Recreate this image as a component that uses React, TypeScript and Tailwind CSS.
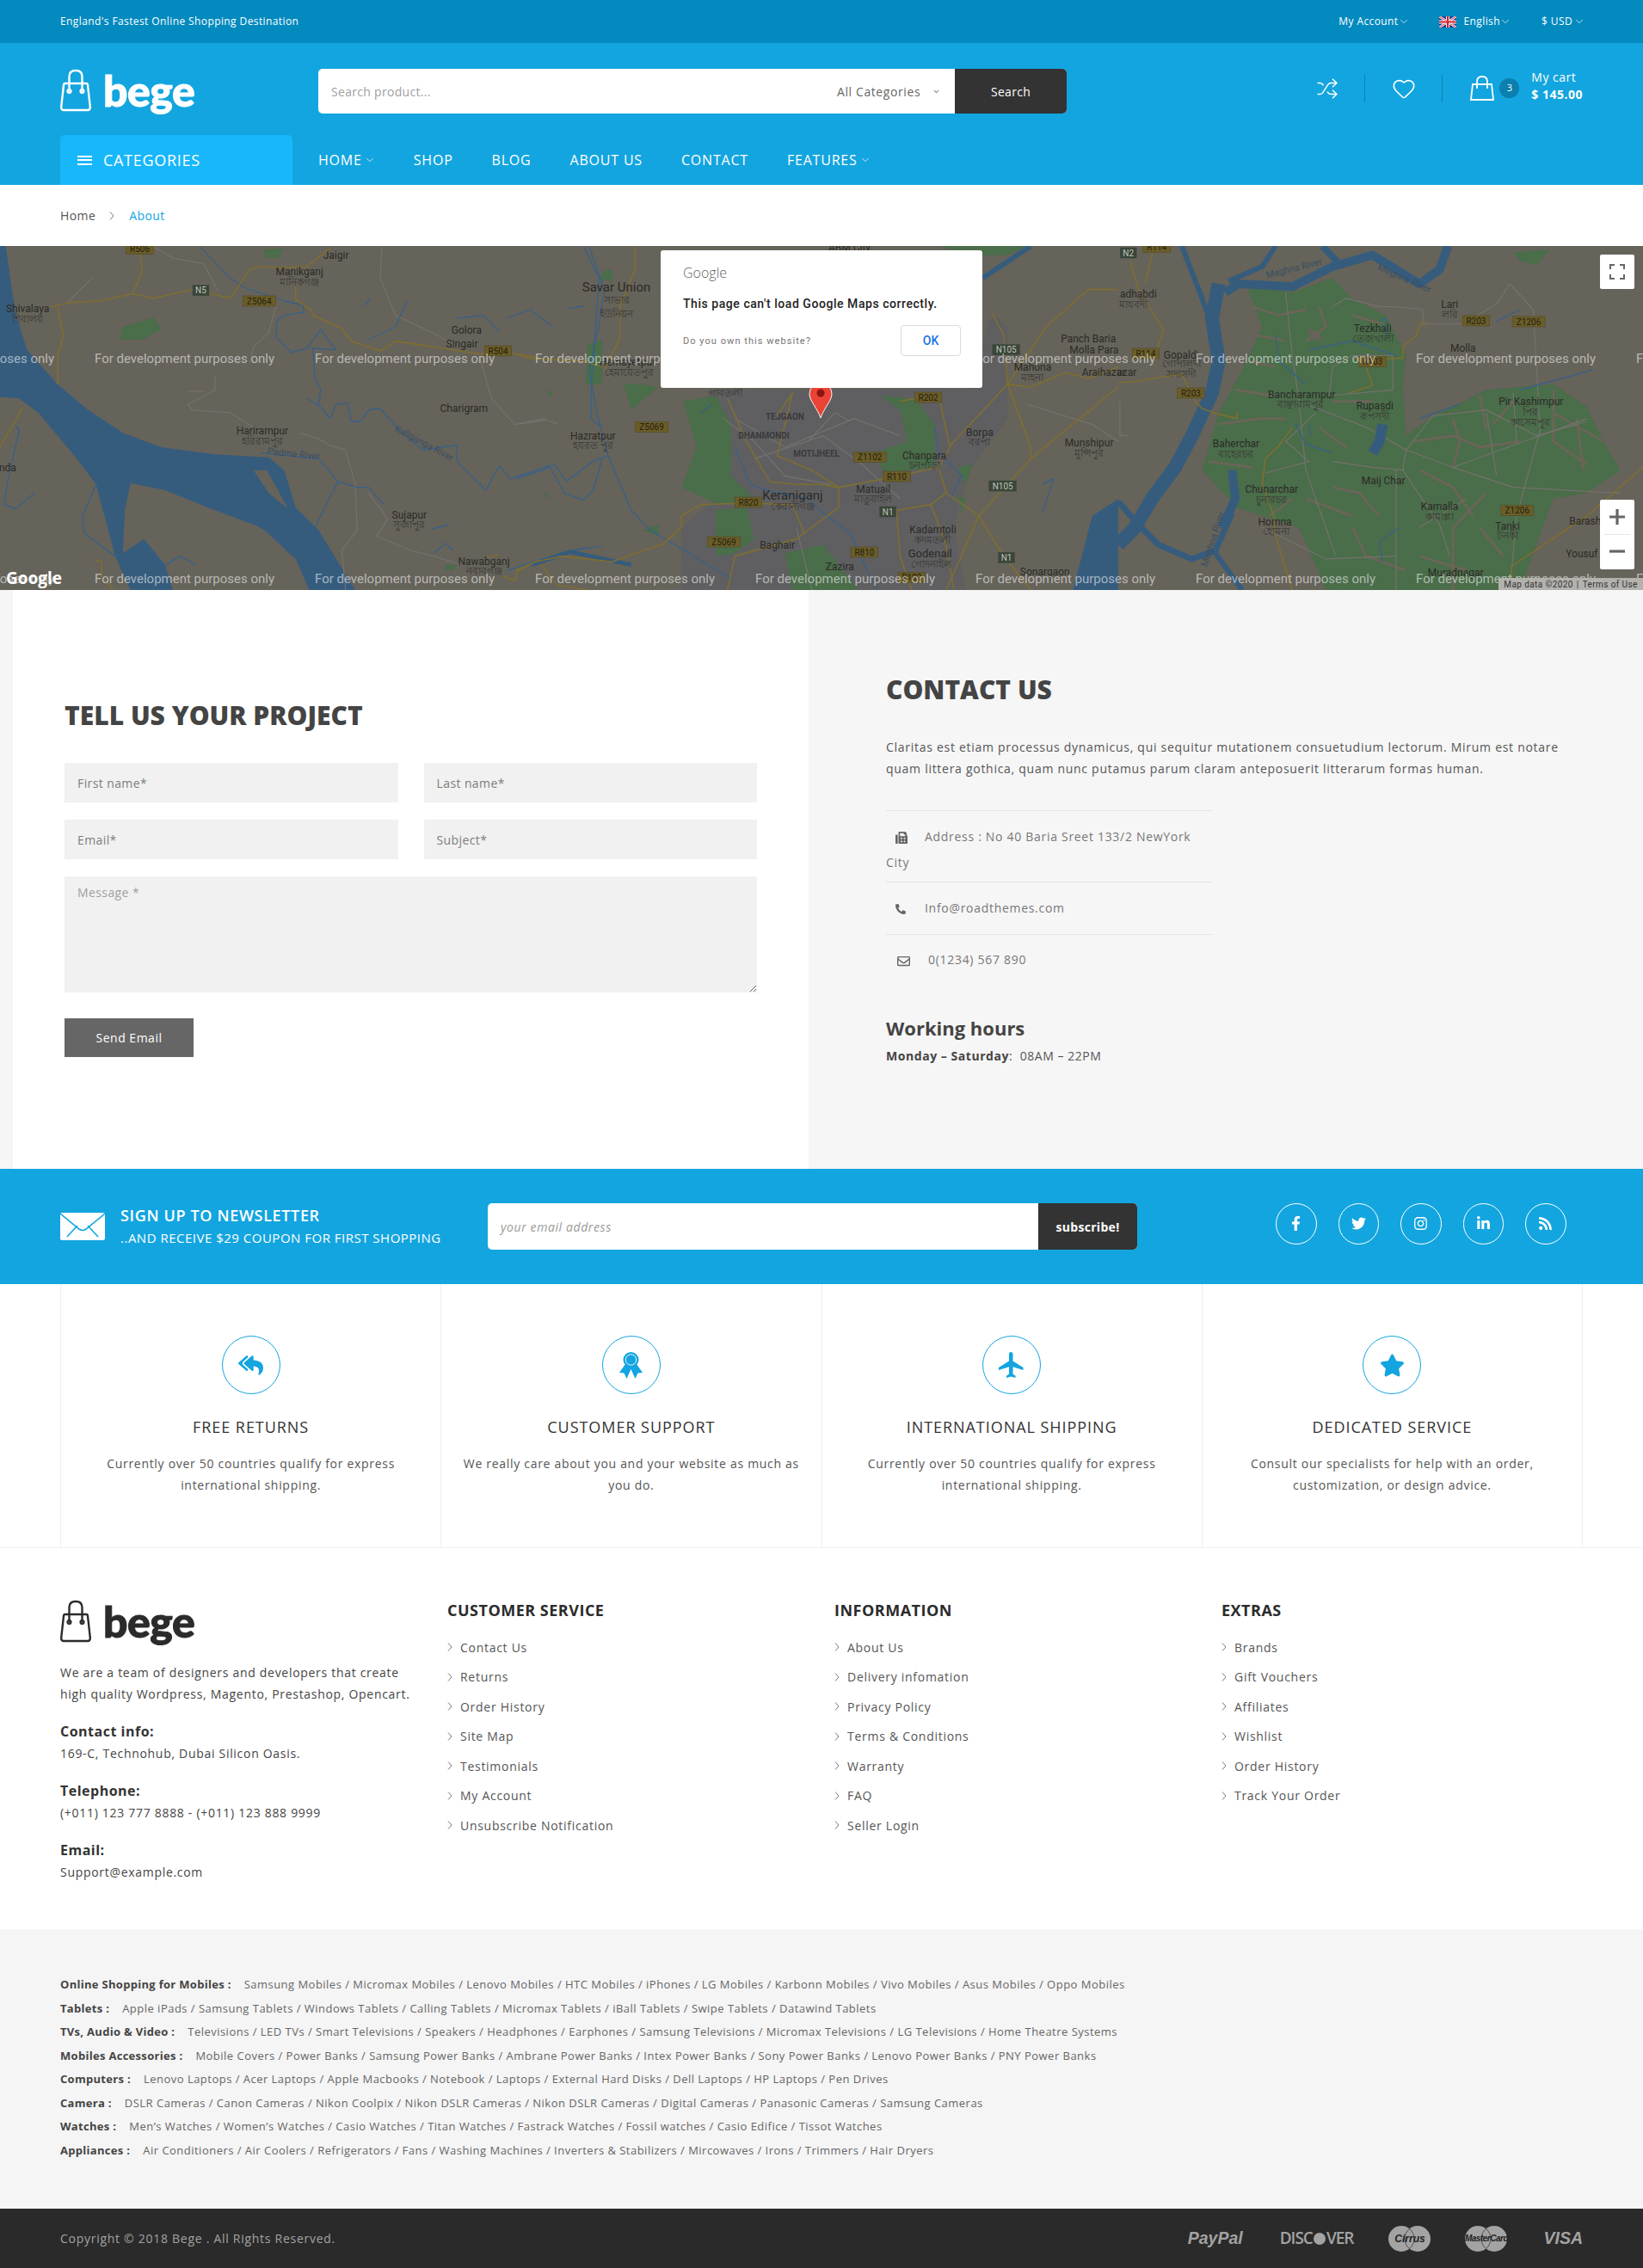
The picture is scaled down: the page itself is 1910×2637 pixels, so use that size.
import { ChevronDown, Heart, Shuffle } from "lucide-react";
import {
  FaFacebookF,
  FaFax,
  FaInstagram,
  FaLinkedinIn,
  FaPhone,
  FaRegEnvelope,
  FaReplyAll,
  FaRss,
  FaStar,
  FaTwitter,
} from "react-icons/fa";
import { MdFlight } from "react-icons/md";

type Pts = string[];
type Label = [number, number, string, number?, number?];
type Shield = [number, number, string, number?];

interface Zone {
  ox: number;
  sx: number;
  water?: Pts;
  land?: Pts;
  city?: Pts;
  green?: Pts;
  fields?: Pts;
  river?: Pts;
  wide?: [string, number][];
  gray?: Pts;
  road?: Pts;
  labels: Label[];
  bn: Label[];
  shields: Shield[];
}

// map traced in three chunks, coords are as measured on the crops
const ZONES: Zone[] = [
  {
    ox: 0,
    sx: 1 / 2.24,
    water: [
      "0,18 15,18 30,160 40,250 70,380 150,500 230,590 320,670 420,720 560,745 700,755 740,800 770,930 830,1010 925,1218 805,1218 770,1110 660,990 540,930 430,870 340,845 325,940 320,1090 375,1040 430,1130 450,1218 340,1218 300,1100 250,850 200,760 100,600 50,550 0,545",
    ],
    land: ["660,800 695,800 750,935 700,880", "655,985 690,1010 765,1105 680,1020"],
    green: ["320,300 370,280 400,268 420,310 370,345 310,345", "685,30 740,28 725,60 695,60", "1420,520 1440,530 1435,550", "1530,360 1568,345 1568,500 1525,500", "1160,1130 1190,1130 1180,1148 1158,1148", "1415,880 1430,885 1425,900"],
    river: [
      "520,20 600,130 640,165 740,210 790,225 790,250 740,260 720,280 720,340 760,390 800,375 835,310 875,380 815,375 820,480 835,520 830,575",
      "800,550 835,580 860,620 875,570 905,565 915,630 940,630 960,590 990,585 1040,660 1100,730 1190,712 1190,770 1265,870 1300,785 1330,830 1430,785 1470,880 1520,905 1545,870 1568,760",
      "250,850 215,960 220,1020 300,1100 310,1100",
      "880,840 820,1000",
      "680,740 830,760 880,840 930,860 960,860 1000,920",
      "40,645 50,660 20,840 10,920 40,935 90,880",
      "1520,20 1560,130 1540,500 1540,620 1568,650",
      "1130,1090 1160,1055 1180,1080",
      "1320,1150 1400,1115 1490,1080 1568,1065",
      "1125,1005 1170,990",
      "950,225 965,205",
      "960,345 1030,300 1060,210",
      "1190,270 1260,260 1300,320",
      "1320,270 1380,240 1440,300",
      "1480,235 1520,228",
      "430,1130 470,1100 510,1130",
    ],
    gray: [
      "240,130 180,210 180,220",
      "400,20 450,60 530,80 570,180",
      "720,220 700,320 660,370 650,430",
      "560,470 560,520 490,570 500,590 600,600 660,650",
      "490,525 530,525",
      "780,670 830,690 860,715 900,730 925,850 930,1010 890,1080 900,1218",
      "960,880 1010,970 980,1030 1070,1080 1130,1100 1200,1130",
      "995,20 990,130 1030,260 1140,330 1190,370",
      "1250,410 1280,550 1340,640 1420,620",
    ],
    road: [
      "365,30 370,110 345,185 255,210 180,215 130,232",
      "345,185 400,200 500,170 600,200 650,100 680,88 720,95 800,90 860,25",
      "770,160 770,205 810,240 815,260 890,305 915,350 990,385 1030,350 1250,395 1330,390 1380,410 1520,420 1568,440",
      "150,232 165,330 150,400 150,500",
      "60,580 0,720",
      "245,1112 265,1120 265,1170 295,1218",
      "1310,1170 1340,1185 1350,1150 1400,1115 1450,1200 1530,1218",
      "1270,1105 1300,1095",
    ],
    labels: [
      [875, 50, "Jaigir"],
      [780, 108, "Manikganj"],
      [72, 237, "Shivalaya"],
      [1215, 312, "Golora"],
      [1203, 360, "Singair"],
      [1208, 583, "Charigram"],
      [683, 663, "Harirampur"],
      [1066, 955, "Sujapur"],
      [1260, 1117, "Nawabganj"],
      [20, 790, "nda"],
      [765, 742, "Padma River", 11, 6],
      [1105, 705, "Kaliganga River", 11, 28],
    ],
    bn: [
      [780, 145, "মানিকগঞ্জ"],
      [72, 272, "শিবালয়"],
      [683, 698, "হরিরামপুর"],
      [1066, 990, "সুজাপুর"],
      [1260, 1152, "নবাবগঞ্জ"],
    ],
    shields: [
      [364, 28, "R506"],
      [523, 173, "N5", 1],
      [675, 210, "Z5064"],
      [1297, 384, "R504"],
    ],
  },
  {
    ox: 600,
    sx: 1 / 2.24,
    city: ["500,520 1170,515 1240,255 1280,300 1280,620 1180,800 1140,1000 1170,1218 430,1218 430,1000 520,900 500,700"],
    water: ["1568,900 1500,960 1450,1218 1568,1218"],
    green: [
      "435,560 520,540 560,640 560,820 620,900 530,920 430,860 470,720",
      "280,500 330,500 370,510 300,590",
      "520,940 600,930 620,1040 570,1090 520,1100",
      "950,540 1040,550 1090,640 1090,790 960,810 930,740 1020,700 1000,590",
      "700,1090 800,1060 890,1218 720,1218",
      "330,1010 370,990 370,1030",
      "1150,790 1190,780 1170,850",
      "1150,880 1170,900 1160,950",
      "230,105 250,100 250,140 215,135",
      "1100,18 1330,18 1280,50 1190,50",
    ],
    river: [
      "190,20 230,170 215,300 190,450 210,600 240,750 300,940 350,1010 450,1090 560,1180",
      "0,830 70,800 100,780 130,840 200,770 240,750",
      "570,720 610,850 650,870 760,900 800,950 870,1020 900,1110 940,1218",
      "1090,650 1100,740 1160,820 1130,900",
      "480,600 510,570",
      "130,1090 180,1070",
      "1370,850 1400,830 1370,950",
    ],
    wide: [["1340,18 1260,90 1215,130", 3], ["300,1130 140,1085 40,1130", 2.5]],
    gray: [
      "570,620 700,720 880,620 1000,680",
      "620,760 800,680 900,780 1000,900",
      "540,620 620,700 700,820 820,850",
      "0,640 80,625 110,640",
      "760,700 830,600 870,630",
      "730,1000 770,1218",
      "1330,570 1500,640 1568,700",
    ],
    road: [
      "0,395 50,405",
      "1240,255 1270,330 1280,500 1340,720 1340,760 1205,960 1120,1218",
      "1280,500 1340,510 1430,460 1490,480 1568,440",
      "1280,500 1380,300 1490,170 1568,170",
      "1568,510 1340,760",
      "840,860 960,830 1100,790 1120,880 1205,960 1260,1080 1340,1218",
      "1120,880 1080,920 990,940 1000,1100 1030,1218",
      "1080,920 1120,1060 1140,1218",
      "840,860 840,930 730,1040 570,1100 550,1218",
      "430,960 430,1000 380,1060 330,1080 250,1120 120,1100 50,1120 0,1150",
      "430,960 480,920 600,915 720,920 750,1020",
      "550,550 600,700 660,840 730,850 790,850 840,860",
      "680,610 720,530 680,750 770,800 840,860",
      "310,20 310,100 270,230 270,340 230,450",
      "1100,790 1130,720 1100,540 1040,550 1000,560",
      "1130,715 1280,500",
    ],
    labels: [
      [868, 22, "ABM City"],
      [261, 160, "Savar Union", 15],
      [200, 679, "Hazratpur"],
      [290, 423, "Hemayetpur"],
      [700, 612, "TEJGAON", 10],
      [645, 678, "DHANMONDI", 10],
      [782, 741, "MOTIJHEEL", 10],
      [720, 887, "Keraniganj", 15],
      [680, 1060, "Baghair"],
      [930, 865, "Matuail"],
      [1063, 748, "Chanpara"],
      [1207, 667, "Borpa"],
      [1085, 1008, "Kadamtoli"],
      [1078, 1090, "Godenail", 13],
      [843, 1135, "Zazira"],
      [1345, 441, "Mahona"],
      [1490, 340, "Panch Baria"],
      [1505, 381, "Molla Para"],
      [1530, 457, "Araihazar"],
      [1492, 703, "Munshipur"],
      [1377, 1153, "Sonargaon"],
    ],
    bn: [
      [261, 207, "সাভার"],
      [261, 255, "ইউনিয়ন"],
      [200, 715, "হযরত পুর"],
      [295, 460, "হেমায়েতপুর"],
      [545, 530, "গাবতলী"],
      [720, 928, "কেরানীগঞ্জ"],
      [930, 900, "মাতুয়াইল"],
      [1063, 783, "চনপাড়া"],
      [1207, 703, "বরপা"],
      [1085, 1045, "কদমতলী"],
      [1080, 1128, "গোদনাইল"],
      [1345, 478, "মাহনা"],
      [1492, 740, "মুন্সিপুর"],
    ],
    shields: [
      [1276, 380, "N105", 1],
      [353, 650, "Z5069"],
      [1073, 546, "R202"],
      [921, 755, "Z1102"],
      [991, 822, "R110"],
      [1267, 855, "N105", 1],
      [605, 912, "R820"],
      [968, 945, "N1", 1],
      [541, 1050, "Z5069"],
      [907, 1086, "R810"],
      [1277, 1105, "N1", 1],
      [1030, 1175, "R102"],
    ],
  },
  {
    ox: 1300,
    sx: 1 / 2.57,
    green: [
      "380,150 520,180 640,130 700,200 800,260 860,400 850,500 860,680 940,610 1000,580 1100,520 1300,500 1400,580 1450,700 1500,800 1400,880 1300,900 1200,1218 620,1218 540,1000 350,930 330,900 250,800 300,600 370,450 430,300",
      "1180,40 1290,30 1250,85 1200,70",
    ],
    land: ["565,305 600,320 610,345 575,345"],
    fields: [
      "400,230 480,260 560,240",
      "420,330 500,350",
      "390,420 470,440",
      "350,520 460,540",
      "300,640 420,620 500,620",
      "270,770 400,790",
      "600,230 620,300 560,350",
      "700,260 790,290",
      "640,560 760,560",
      "880,700 1000,680 1080,720 1200,700",
      "1000,620 1020,700 1000,790",
      "1080,540 1100,660",
      "1300,520 1300,700 1400,780",
      "1180,560 1120,640",
      "900,800 1000,860 1060,960",
      "1100,880 1000,1000 1000,1218",
      "640,860 720,880 780,960",
      "560,900 700,960",
      "700,1000 740,1100 860,1150",
      "900,1100 1040,1150",
      "1080,1000 1150,1100",
      "1300,600 1450,700",
      "1370,620 1390,800",
      "450,960 520,900",
      "600,650 680,720",
    ],
    wide: [
      ["320,180 360,150 520,160 640,90 760,50 900,150 960,100 985,18", 5],
      ["300,150 280,270 300,420 280,530 220,680 170,790 100,900 50,1000 0,1060", 8],
      ["190,18 250,200 290,330", 3],
      ["470,18 430,90 330,140", 3],
      ["610,18 660,80", 4],
      ["0,910 60,990 120,1060 220,1110 290,1080 340,950", 3.5],
      ["290,1090 370,1218", 3],
      ["340,800 350,900 310,1000", 5],
      ["790,640 780,700 760,740", 6],
    ],
    river: [
      "470,330 480,420 560,500",
      "570,380 700,350 830,400",
      "530,640 560,710 640,740",
      "900,620 1020,570",
      "1200,520 1420,450",
      "570,640 575,680",
      "780,280 800,270 800,340",
      "1130,280 1200,240",
      "840,1000 780,1050 790,1120",
    ],
    gray: [
      "500,180 520,400 540,560 560,800 620,1000 650,1100",
      "640,230 680,200 780,230 830,230 910,240 910,290 1030,290",
      "1030,290 1130,220 1170,150 1240,240 1260,660 1190,960 1170,1218",
      "560,570 740,650 860,730 1000,790 1180,860",
      "640,770 760,790 850,800 860,730 940,610 1100,590 1250,680 1400,630",
      "590,600 500,700 570,770 440,810",
      "700,400 640,440 630,540 820,520 820,400 700,400",
      "850,800 960,990 990,1100",
      "830,800 830,1218",
      "1000,790 1400,620",
      "1180,860 1500,880",
      "430,1000 620,1110 830,1100",
      "5,560 5,680 30,680",
      "1190,700 1180,530",
      "1100,600 1130,820",
      "900,1000 1040,900",
    ],
    road: [
      "35,70 60,170 135,310 110,400",
      "105,30 80,150",
      "0,495 60,490 130,475 190,466 230,560 250,585 300,605 355,620 355,595",
      "520,650 480,715 440,760 430,850 465,960 470,1030 520,1218",
      "690,530 760,505 740,440 710,410 850,410 850,370 890,330 905,285 920,285",
      "1175,1218 1175,1135 1400,960 1568,790",
    ],
    labels: [
      [60, 186, "adhabdi"],
      [188, 397, "Gopaldi"],
      [990, 222, "Lari"],
      [760, 306, "Tezkhali"],
      [1030, 373, "Molla"],
      [548, 535, "Bancharampur"],
      [767, 576, "Rupasdi"],
      [1233, 561, "Pir Kashimpur"],
      [352, 708, "Baherchar"],
      [792, 837, "Maij Char"],
      [458, 867, "Chunarchar"],
      [960, 927, "Kamalla"],
      [468, 979, "Homna"],
      [1163, 996, "Tanki"],
      [1395, 978, "Barash"],
      [1385, 1092, "Yousuf"],
      [1008, 1158, "Muradnagar"],
      [25, 457, "azar"],
      [525, 95, "Meghna River", 11, -14],
      [855, 130, "Meghna River", 11, 24],
      [282, 1040, "Meghna River", 11, -72],
    ],
    bn: [
      [45, 222, "মাধবদী"],
      [188, 430, "গোপালদী"],
      [188, 466, "সদাসদী"],
      [990, 258, "লরি"],
      [760, 342, "তেজখালী"],
      [545, 570, "বাঞ্ছারামপুর"],
      [767, 612, "রূপসদী"],
      [1230, 597, "পির"],
      [1230, 633, "কাসেমপুর"],
      [352, 745, "বাহেরচর"],
      [458, 903, "চুনারচর"],
      [960, 963, "কামাল্লা"],
      [472, 1015, "হোমনা"],
      [1163, 1030, "টনকী"],
    ],
    shields: [
      [30, 42, "N2", 1],
      [115, 22, "R114"],
      [82, 393, "R114"],
      [217, 531, "R203"],
      [1069, 279, "R203"],
      [1226, 282, "Z1206"],
      [760, 422, "R103"],
      [1192, 941, "Z1206"],
    ],
  },
];

const WATERMARK_X = [-146, 110, 366, 622, 878, 1134, 1390, 1646, 1902];

const MapArt = () => (
  <svg viewBox="0 0 1910 400" className="block h-[400px] w-full bg-[#66635a]">
    {ZONES.map((z) => (
      <g key={z.ox} transform={`translate(${z.ox} -6) scale(${z.sx} 0.3333)`} fill="none" strokeLinejoin="round">
        {z.city?.map((p, i) => <polygon key={i} points={p} fill="#5f5f61" />)}
        {z.green?.map((p, i) => <polygon key={i} points={p} fill="#4a6d4a" />)}
        {z.fields?.map((p, i) => <polyline key={i} points={p} stroke="#6a6558" strokeWidth={3} vectorEffect="non-scaling-stroke" />)}
        {z.water?.map((p, i) => <polygon key={i} points={p} fill="#365c7d" />)}
        {z.land?.map((p, i) => <polygon key={i} points={p} fill="#66635a" />)}
        {z.gray?.map((p, i) => <polyline key={i} points={p} stroke="#75726d" strokeWidth={1.2} vectorEffect="non-scaling-stroke" />)}
        {z.river?.map((p, i) => <polyline key={i} points={p} stroke="#37618a" strokeWidth={1.3} vectorEffect="non-scaling-stroke" />)}
        {z.wide?.map(([p, w], i) => <polyline key={i} points={p} stroke="#365c7d" strokeWidth={w * 2} vectorEffect="non-scaling-stroke" />)}
        {z.road?.map((p, i) => <polyline key={i} points={p} stroke="#7f6e30" strokeWidth={1.6} vectorEffect="non-scaling-stroke" />)}
      </g>
    ))}
    {ZONES.map((z) => (
      <g key={z.ox} fontFamily="Roboto, sans-serif" textAnchor="middle">
        {z.shields.map(([zx, zy, t, green]) => {
          const x = z.ox + zx * z.sx;
          const y = zy / 3 - 6;
          const w = t.length * 6.4 + 6;
          return (
            <g key={`${zx}-${zy}`}>
              <rect x={x - w / 2} y={y - 6} width={w} height={12} fill={green ? "#3a4638" : "#6b5d28"} stroke={green ? "#3a4638" : "#4e4520"} strokeWidth={0.5} />
              <text x={x} y={y + 3.5} fontSize={10} fill={green ? "#bfc4bd" : "#22200f"}>{t}</text>
            </g>
          );
        })}
        {z.labels.map(([zx, zy, t, size, rot]) => {
          const x = z.ox + zx * z.sx;
          const y = zy / 3 - 6;
          return (
            <text
              key={`${t}-${zx}`}
              x={x}
              y={y + (size ?? 12) * 0.36}
              fontSize={size ?? 12}
              fill={size === 11 ? "#3a4f63" : size === 10 ? "#39393c" : "#2b2a27"}
              fontWeight={size === 10 ? 700 : 400}
              transform={rot ? `rotate(${rot} ${x} ${y})` : undefined}
            >
              {t}
            </text>
          );
        })}
        {z.bn.map(([zx, zy, t]) => (
          <text key={`${t}-${zx}`} x={z.ox + zx * z.sx} y={zy / 3 - 2} fontSize={12} fill="#3a3936">{t}</text>
        ))}
      </g>
    ))}
    <g fontFamily="Roboto, sans-serif" fontSize={15} fill="#ffffff" fillOpacity={0.55}>
      {WATERMARK_X.map((x) => <text key={x} x={x} y={136}>For development purposes only</text>)}
      {WATERMARK_X.map((x) => <text key={x} x={x} y={392}>For development purposes only</text>)}
    </g>
    <path d="M954 200 C950 188 941 180 941 172 a13 13 0 1 1 26 0 C967 180 958 188 954 200 z" fill="#ea4335" stroke="#f4f4f4" strokeWidth={1} />
    <circle cx={954} cy={171} r={4.5} fill="#8a1410" />
    <text x={7} y={393} fontFamily="'Open Sans', sans-serif" fontSize={19} fontWeight={700} fill="#ffffff">Google</text>
  </svg>
);

const BagIcon = ({ className }: { className?: string }) => (
  <svg viewBox="0 0 36 50" fill="none" stroke="currentColor" className={className}>
    <path d="M5.5 17 H30.5 Q31.8 17 32 19 L34.8 44 Q35 48 32 48 H4 Q1 48 1.2 44 L4 19 Q4.2 17 5.5 17 Z" strokeWidth={2.4} />
    <path d="M10.5 27 V9 Q10.5 2 18 2 Q25.5 2 25.5 9 V27" strokeWidth={2.4} />
    <circle cx={10.5} cy={26} r={2.2} strokeWidth={1.8} />
    <circle cx={25.5} cy={26} r={2.2} strokeWidth={1.8} />
  </svg>
);

const Logo = ({ dark }: { dark?: boolean }) => (
  <div className={`flex h-[50px] items-start ${dark ? "text-[#2b2b2b]" : "text-white"}`}>
    <BagIcon className="h-[50px] w-[36px]" />
    <span className="ml-[14px] font-['Lato'] text-[50px] leading-[50px] font-black tracking-[-0.5px] [-webkit-text-stroke:1px_currentColor]">bege</span>
  </div>
);

const UkFlag = () => (
  <svg viewBox="0 0 20 13" className="h-[13px] w-[20px]">
    <rect width={20} height={13} fill="#27408b" />
    <path d="M0 0 L20 13 M20 0 L0 13" stroke="#fff" strokeWidth={2.4} />
    <path d="M0 0 L20 13 M20 0 L0 13" stroke="#d3202f" strokeWidth={0.9} />
    <path d="M10 0 V13 M0 6.5 H20" stroke="#fff" strokeWidth={4} />
    <path d="M10 0 V13 M0 6.5 H20" stroke="#d3202f" strokeWidth={2.2} />
  </svg>
);

const Caret = () => <ChevronDown size={14} strokeWidth={1.2} className="-mx-[1px]" />;

const Chev = ({ className }: { className?: string }) => (
  <svg viewBox="0 0 6 10" fill="none" stroke="currentColor" strokeWidth={0.8} className={`h-[10px] w-[6px] ${className ?? ""}`}>
    <path d="M1 0.5 L5 5 L1 9.5" />
  </svg>
);

const TopBar = () => (
  <div className="flex h-[50px] items-center justify-between bg-[#038abf] pl-[70px] pr-[68px] text-[12px] tracking-[0.4px] text-white">
    <p>England's Fastest Online Shopping Destination</p>
    <div className="flex items-center">
      <span className="flex items-center">My Account<Caret /></span>
      <span className="ml-[35px] flex items-center"><UkFlag /><span className="ml-[9px]">English</span><Caret /></span>
      <span className="ml-[36px] flex items-center">$ USD<span className="ml-[2px]"><Caret /></span></span>
    </div>
  </div>
);

const CartBag = () => (
  <svg viewBox="0 0 28 29" fill="none" stroke="currentColor" strokeWidth={1.8} className="h-[29px] w-[28px]">
    <path d="M3 10 H25 L27 28 H1 Z" />
    <path d="M8 15 V7 Q8 1 14 1 Q20 1 20 7 V15" />
  </svg>
);

const MainHeader = () => (
  <div className="flex h-[107px] items-start bg-[#13a5df] px-[70px] pt-[30px] text-white">
    <div className="w-[300px]"><Logo /></div>
    <div className="flex h-[52px] w-[870px] overflow-hidden rounded-[5px] bg-white text-[14px]">
      <span className="flex flex-1 items-center pl-[15px] tracking-[0.3px] text-[#a0a0a0]">Search product...</span>
      <span className="flex w-[150px] items-center justify-between pl-[13px] pr-[17px] tracking-[0.6px] text-[#666]">
        All Categories
        <ChevronDown size={9} strokeWidth={3} className="text-[#888]" />
      </span>
      <span className="flex w-[130px] items-center justify-center bg-[#333] tracking-[0.3px] text-white">Search</span>
    </div>
    <div className="ml-auto flex h-[52px] items-start">
      <div className="mt-[7px] flex h-[32px] items-center border-r border-[#0b83b5] pr-[30px]">
        <Shuffle size={26} strokeWidth={1.4} />
      </div>
      <div className="mt-[7px] flex h-[32px] items-center border-r border-[#0b83b5] pl-[31px] pr-[30px]">
        <Heart size={28} strokeWidth={1.4} />
      </div>
      <div className="ml-[32px] mt-[8px] flex items-center">
        <CartBag />
        <span className="ml-[6px] flex h-[23px] w-[23px] items-center justify-center rounded-full bg-[#0b7fae] text-[11px]">3</span>
      </div>
      <div className="ml-[14px] flex flex-col text-[14px] leading-[20px] tracking-[0.5px]">
        <span>My cart</span>
        <span className="font-bold">$ 145.00</span>
      </div>
    </div>
  </div>
);

const NAV: [string, boolean][] = [["HOME", true], ["SHOP", false], ["BLOG", false], ["ABOUT US", false], ["CONTACT", false], ["FEATURES", true]];

const NavBar = () => (
  <div className="flex h-[58px] bg-[#13a5df] px-[70px] text-white">
    <div className="flex w-[270px] items-center rounded-t-[5px] bg-[#18b7fa] pl-[20px]">
      <span className="flex h-[11px] w-[17px] flex-col justify-between">
        <i className="block h-[2px] bg-white" />
        <i className="block h-[2px] bg-white" />
        <i className="block h-[2px] bg-white" />
      </span>
      <span className="ml-[13px] text-[18px] font-medium tracking-[0.7px]">CATEGORIES</span>
    </div>
    <nav className="ml-[30px] flex items-center gap-[45px] text-[16px] font-medium tracking-[0.8px]">
      {NAV.map(([label, caret]) => (
        <span key={label} className="flex items-center">
          {label}
          {caret && <span className="ml-[3px]"><Caret /></span>}
        </span>
      ))}
    </nav>
  </div>
);

const Breadcrumb = () => (
  <div className="flex h-[71px] items-center bg-white px-[70px] text-[14px] tracking-[0.4px] text-[#555]">
    <span>Home</span>
    <Chev className="ml-[16px] mr-[17px]" />
    <span className="text-[#13a5df]">About</span>
  </div>
);

const MapBlock = () => (
  <div className="relative h-[400px] overflow-hidden">
    <MapArt />
    <div className="absolute left-[768px] top-[5px] h-[160px] w-[374px] rounded-[3px] bg-white pl-[26px] pr-[25px] pt-[14px] font-['Roboto']">
      <p className="font-['Open_Sans'] text-[16px] font-light leading-[24px] text-[#5f6368]">Google</p>
      <p className="mt-[12px] text-[14px] font-medium leading-[24px] tracking-[0.55px] text-[#222]">This page can't load Google Maps correctly.</p>
      <div className="mt-[13px] flex items-center justify-between">
        <span className="pt-[2px] text-[11px] tracking-[1.05px] text-[#757575]">Do you own this website?</span>
        <span className="flex h-[36px] w-[70px] items-center justify-center rounded-[4px] border border-[#dadce0] text-[14px] font-medium text-[#1a73e8]">OK</span>
      </div>
    </div>
    <div className="absolute right-[10px] top-[10px] flex h-[40px] w-[40px] items-center justify-center rounded-[2px] bg-white">
      <svg viewBox="0 0 18 18" className="h-[18px] w-[18px]" fill="none" stroke="#666" strokeWidth={2}>
        <path d="M1 6 V1 H6 M12 1 H17 V6 M17 12 V17 H12 M6 17 H1 V12" />
      </svg>
    </div>
    <div className="absolute right-[10px] top-[295px] flex h-[81px] w-[40px] flex-col items-center rounded-[2px] bg-white">
      <svg viewBox="0 0 18 18" className="mt-[11px] h-[18px] w-[18px]" stroke="#666" strokeWidth={3.2}><path d="M9 0 V18 M0 9 H18" /></svg>
      <i className="mt-[11px] block h-px w-[30px] bg-[#e6e6e6]" />
      <svg viewBox="0 0 18 18" className="mt-[10px] h-[18px] w-[18px]" stroke="#666" strokeWidth={3.2}><path d="M0 9 H18" /></svg>
    </div>
    <div className="absolute bottom-0 right-0 flex h-[14px] w-[168px] items-center justify-center bg-[#b3b2ad] font-['Roboto'] text-[10px] tracking-[0.4px] text-[#333]">
      Map data ©2020 <span className="mx-[4px]">|</span> Terms of Use
    </div>
  </div>
);

const INPUT = "h-[46px] w-full bg-[#f1f1f1] px-[15px] text-[14px] tracking-[0.4px] outline-none placeholder:text-[#7d7d7d]";

const ContactSection = () => (
  <div className="flex h-[673px] bg-[#f6f6f6]">
    <div className="ml-[15px] w-[925px] bg-white px-[60px] pt-[128px]">
      <h2 className="text-[30px] font-extrabold leading-[36px] text-[#444]">TELL US YOUR PROJECT</h2>
      <div className="mt-[37px] grid grid-cols-2 gap-x-[30px] gap-y-[20px]">
        <input className={INPUT} placeholder="First name*" />
        <input className={INPUT} placeholder="Last name*" />
        <input className={INPUT} placeholder="Email*" />
        <input className={INPUT} placeholder="Subject*" />
      </div>
      <textarea className="mt-[20px] block h-[134.5px] w-full bg-[#f1f1f1] px-[15px] py-[8px] text-[14px] tracking-[0.4px] outline-none placeholder:text-[#a0a0a0]" placeholder="Message *" />
      <button className="mt-[30.5px] block h-[45px] w-[150px] bg-[#666] text-[14px] tracking-[0.5px] text-white">Send Email</button>
    </div>
    <div className="flex-1 pl-[90px] pt-[98px]">
      <h2 className="text-[30px] font-extrabold leading-[36px] text-[#444]">CONTACT US</h2>
      <p className="mt-[35.5px] w-[800px] text-[14px] leading-[25px] tracking-[0.72px] text-[#555]">
        Claritas est etiam processus dynamicus, qui sequitur mutationem consuetudium lectorum. Mirum est notare quam littera gothica, quam nunc putamus parum claram anteposuerit litterarum formas human.
      </p>
      <ul className="mt-[36.5px] w-[380px] text-[14px] leading-[30px] tracking-[0.7px] text-[#777]">
        <li className="border-t border-[#e4e4e4] pb-[7px] pt-[15px]">
          <FaFax className="ml-[11px] mr-[20px] inline-block h-[14px] w-[14px] text-[#666]" />
          Address : No 40 Baria Sreet 133/2 NewYork City
        </li>
        <li className="border-t border-[#e4e4e4] py-[15px]">
          <FaPhone className="ml-[11px] mr-[22px] inline-block h-[12px] w-[12px] -scale-x-100 text-[#666]" />
          Info@roadthemes.com
        </li>
        <li className="border-t border-[#e4e4e4] pt-[14px]">
          <FaRegEnvelope className="ml-[13px] mr-[21px] inline-block h-[15px] w-[15px] text-[#666]" />
          0(1234) 567 890
        </li>
      </ul>
      <h3 className="mt-[51px] text-[22px] font-bold leading-[26px] text-[#444]">Working hours</h3>
      <p className="mt-[6.5px] text-[14px] leading-[25px] tracking-[0.55px] text-[#555]">
        <b className="font-bold text-[#444]">Monday – Saturday</b>:&nbsp; 08AM – 22PM
      </p>
    </div>
  </div>
);

const SOCIALS = [FaFacebookF, FaTwitter, FaInstagram, FaLinkedinIn, FaRss];

const Newsletter = () => (
  <div className="flex h-[134px] bg-[#13a5df] pl-[70px] pt-[40px] text-white">
    <div className="flex h-[54px] w-[497px] items-center">
      <svg viewBox="0 0 52 32" className="h-[32px] w-[52px]">
        <rect width={52} height={32} rx={2} fill="#fff" />
        <path d="M0 1 L22 19 Q26 22 30 19 L52 1 M8 28 L20 15 M44 28 L32 15" fill="none" stroke="#13a5df" strokeWidth={1.6} />
      </svg>
      <div className="ml-[18px]">
        <p className="text-[18px] font-semibold leading-[26px] tracking-[0.65px]">SIGN UP TO NEWSLETTER</p>
        <p className="text-[15px] leading-[26px] tracking-[0.5px]">..AND RECEIVE $29 COUPON FOR FIRST SHOPPING</p>
      </div>
    </div>
    <div className="flex h-[54px] w-[755px] overflow-hidden rounded-[5px] bg-white">
      <span className="flex flex-1 items-center pl-[15px] text-[14px] italic tracking-[0.6px] text-[#999]">your email address</span>
      <span className="flex w-[115px] items-center justify-center bg-[#333] text-[14px] font-bold tracking-[0.3px]">subscribe!</span>
    </div>
    <div className="ml-[161px] flex gap-[25px]">
      {SOCIALS.map((Icon, i) => (
        <span key={i} className="flex h-[47.5px] w-[47.5px] items-center justify-center rounded-full border border-white">
          <Icon size={17} />
        </span>
      ))}
    </div>
  </div>
);

const RibbonIcon = () => (
  <svg viewBox="0 0 27 31" className="h-[31px] w-[27px]">
    <path d="M7 14 L0 24 L5.5 24.5 L8.5 31 L13.5 20 L18.5 31 L21.5 24.5 L27 24 L20 14 Z" fill="currentColor" />
    <circle cx={13.5} cy={9} r={9} fill="currentColor" />
    <circle cx={13.5} cy={9} r={6.2} fill="none" stroke="#fff" strokeWidth={0.9} />
  </svg>
);

const FEATURES = [
  { title: "FREE RETURNS", text: "Currently over 50 countries qualify for express international shipping.", icon: <FaReplyAll size={29} /> },
  { title: "CUSTOMER SUPPORT", text: "We really care about you and your website as much as you do.", icon: <RibbonIcon /> },
  { title: "INTERNATIONAL SHIPPING", text: "Currently over 50 countries qualify for express international shipping.", icon: <MdFlight size={36} /> },
  { title: "DEDICATED SERVICE", text: "Consult our specialists for help with an order, customization, or design advice.", icon: <FaStar size={29} /> },
];

const Features = () => (
  <div className="border-b border-[#eeeeee] px-[70px]">
    <div className="grid h-[306px] grid-cols-4 border-r border-[#eeeeee]">
      {FEATURES.map(({ title, text, icon }) => (
        <div key={title} className="flex flex-col items-center border-l border-[#eeeeee] px-[20px] pt-[60px] text-center">
          <span className="flex h-[68px] w-[68px] items-center justify-center rounded-full border border-[#13a5df] text-[#13a5df]">
            {icon}
          </span>
          <h3 className="mt-[25px] text-[18px] font-medium leading-[26px] tracking-[0.95px] text-[#333]">{title}</h3>
          <p className="mt-[17px] text-[14px] leading-[25px] tracking-[0.7px] text-[#555]">{text}</p>
        </div>
      ))}
    </div>
  </div>
);

const LINKS: [string, string[]][] = [
  ["CUSTOMER SERVICE", ["Contact Us", "Returns", "Order History", "Site Map", "Testimonials", "My Account", "Unsubscribe Notification"]],
  ["INFORMATION", ["About Us", "Delivery infomation", "Privacy Policy", "Terms & Conditions", "Warranty", "FAQ", "Seller Login"]],
  ["EXTRAS", ["Brands", "Gift Vouchers", "Affiliates", "Wishlist", "Order History", "Track Your Order"]],
];

const CONTACT_INFO: [string, string][] = [
  ["Contact info:", "169-C, Technohub, Dubai Silicon Oasis."],
  ["Telephone:", "(+011) 123 777 8888 - (+011) 123 888 9999"],
  ["Email:", "Support@example.com"],
];

const FooterMain = () => (
  <div className="grid h-[443px] grid-cols-[450px_450px_450px_1fr] px-[70px] pt-[60px]">
    <div>
      <Logo dark />
      <p className="mt-[21.5px] w-[420px] text-[14px] leading-[25px] tracking-[0.7px] text-[#444]">
        We are a team of designers and developers that create high quality Wordpress, Magento, Prestashop, Opencart.
      </p>
      {CONTACT_INFO.map(([label, value]) => (
        <div key={label} className="mt-[19px]">
          <p className="text-[16px] font-bold leading-[25px] tracking-[0.5px] text-[#333]">{label}</p>
          <p className="text-[14px] leading-[25px] tracking-[0.7px] text-[#444]">{value}</p>
        </div>
      ))}
    </div>
    {LINKS.map(([title, items]) => (
      <div key={title}>
        <h4 className="text-[18px] font-bold leading-[24px] tracking-[0.5px] text-[#2b2b2b]">{title}</h4>
        <ul className="mt-[14px] text-[14px] tracking-[0.72px] text-[#555]">
          {items.map((item) => (
            <li key={item} className="flex h-[34.5px] items-center">
              <Chev className="mr-[9px]" />
              {item}
            </li>
          ))}
        </ul>
      </div>
    ))}
  </div>
);

const TAGS: [string, string[]][] = [
  ["Online Shopping for Mobiles", ["Samsung Mobiles", "Micromax Mobiles", "Lenovo Mobiles", "HTC Mobiles", "iPhones", "LG Mobiles", "Karbonn Mobiles", "Vivo Mobiles", "Asus Mobiles", "Oppo Mobiles"]],
  ["Tablets", ["Apple iPads", "Samsung Tablets", "Windows Tablets", "Calling Tablets", "Micromax Tablets", "iBall Tablets", "Swipe Tablets", "Datawind Tablets"]],
  ["TVs, Audio & Video", ["Televisions", "LED TVs", "Smart Televisions", "Speakers", "Headphones", "Earphones", "Samsung Televisions", "Micromax Televisions", "LG Televisions", "Home Theatre Systems"]],
  ["Mobiles Accessories", ["Mobile Covers", "Power Banks", "Samsung Power Banks", "Ambrane Power Banks", "Intex Power Banks", "Sony Power Banks", "Lenovo Power Banks", "PNY Power Banks"]],
  ["Computers", ["Lenovo Laptops", "Acer Laptops", "Apple Macbooks", "Notebook", "Laptops", "External Hard Disks", "Dell Laptops", "HP Laptops", "Pen Drives"]],
  ["Camera", ["DSLR Cameras", "Canon Cameras", "Nikon Coolpix", "Nikon DSLR Cameras", "Nikon DSLR Cameras", "Digital Cameras", "Panasonic Cameras", "Samsung Cameras"]],
  ["Watches", ["Men’s Watches", "Women’s Watches", "Casio Watches", "Titan Watches", "Fastrack Watches", "Fossil watches", "Casio Edifice", "Tissot Watches"]],
  ["Appliances", ["Air Conditioners", "Air Coolers", "Refrigerators", "Fans", "Washing Machines", "Inverters & Stabilizers", "Mircowaves", "Irons", "Trimmers", "Hair Dryers"]],
];

const TagLinks = () => (
  <div className="h-[325px] bg-[#f5f5f5] px-[70px] pt-[51px] text-[13px] tracking-[0.48px] text-[#666]">
    {TAGS.map(([label, items]) => (
      <p key={label} className="h-[27.5px] leading-[27.5px]">
        <b className="mr-[15px] font-bold tracking-[0.3px] text-[#444]">{label} :</b>
        {items.join(" / ")}
      </p>
    ))}
  </div>
);

const CardLogo = ({ label, small }: { label: string; small?: boolean }) => (
  <span className="relative block h-[30px] w-[49px]">
    <svg viewBox="0 0 49 30" className="absolute inset-0 h-[30px] w-[49px]">
      <circle cx={15} cy={15} r={15} fill="#a3a3a3" />
      <circle cx={34} cy={15} r={15} fill="#a3a3a3" />
      <path d="M24.5 3.4 A15 15 0 0 1 24.5 26.6 A15 15 0 0 1 24.5 3.4 Z" fill="none" stroke="#2a2a2a" strokeWidth={0.7} />
    </svg>
    <span className={`absolute inset-0 flex items-center justify-center font-['Liberation_Sans'] font-bold italic text-[#222] ${small ? "text-[10px] tracking-[-0.5px]" : "text-[12px]"}`}>{label}</span>
  </span>
);

const BottomBar = () => (
  <div className="flex h-[69px] items-center bg-[#2a2a2a] px-[70px] text-[#a3a3a3]">
    <p className="text-[14px] tracking-[0.72px]">Copyright © 2018 Bege . All Rights Reserved.</p>
    <div className="ml-auto flex items-center">
      <span className="font-['Liberation_Sans'] text-[19.5px] font-bold italic">PayPal</span>
      <span className="ml-[43px] flex items-center font-['Open_Sans'] text-[19px] font-semibold tracking-[-1px]">
        DISC<i className="mx-[1px] block h-[14px] w-[14px] rounded-full bg-[#a3a3a3]" />VER
      </span>
      <span className="ml-[41px]"><CardLogo label="Cirrus" /></span>
      <span className="ml-[40px]"><CardLogo label="MasterCard" small /></span>
      <span className="ml-[42px] font-['Liberation_Sans'] text-[19.5px] font-bold italic">VISA</span>
    </div>
  </div>
);

export default function App() {
  return (
    <div className="w-[1910px] bg-white font-['Open_Sans',sans-serif]">
      <TopBar />
      <MainHeader />
      <NavBar />
      <Breadcrumb />
      <MapBlock />
      <ContactSection />
      <Newsletter />
      <Features />
      <FooterMain />
      <TagLinks />
      <BottomBar />
    </div>
  );
}
